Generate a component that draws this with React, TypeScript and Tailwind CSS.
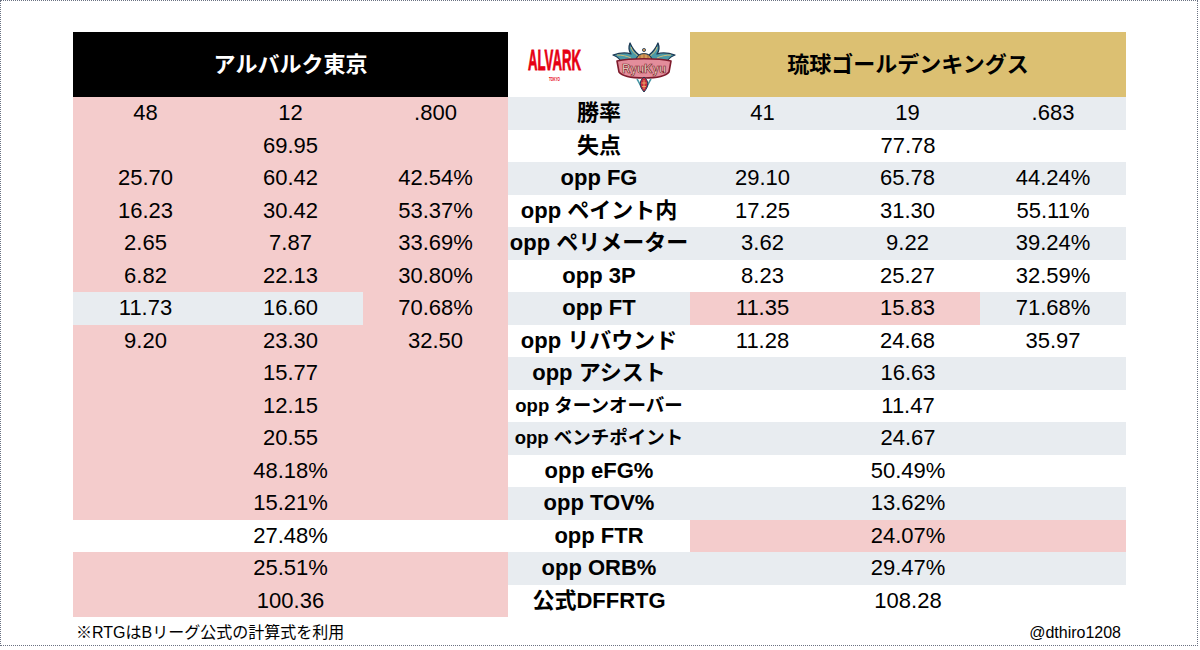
import React from "react";

type Bg = "p" | "g" | "w";
type Side = { v: string[]; bg: Bg[] };
type Row = { label: string; small?: boolean; l: Side; r: Side; stripe: Bg };

const bgClass: Record<Bg, string> = {
    p: "bg-[#f4cccc]",
    g: "bg-[#e8ecf0]",
    w: "bg-white",
};

const tri = (a: string, b: string, c: string, bg: Bg): Side => ({ v: [a, b, c], bg: [bg, bg, bg] });
const one = (a: string, bg: Bg): Side => ({ v: [a], bg: [bg] });

const rows: Row[] = [
    { label: "勝率", l: tri("48", "12", ".800", "p"), r: tri("41", "19", ".683", "g"), stripe: "g" },
    { label: "失点", l: one("69.95", "p"), r: one("77.78", "w"), stripe: "w" },
    { label: "opp FG", l: tri("25.70", "60.42", "42.54%", "p"), r: tri("29.10", "65.78", "44.24%", "g"), stripe: "g" },
    { label: "opp ペイント内", l: tri("16.23", "30.42", "53.37%", "p"), r: tri("17.25", "31.30", "55.11%", "w"), stripe: "w" },
    { label: "opp ペリメーター", l: tri("2.65", "7.87", "33.69%", "p"), r: tri("3.62", "9.22", "39.24%", "g"), stripe: "g" },
    { label: "opp 3P", l: tri("6.82", "22.13", "30.80%", "p"), r: tri("8.23", "25.27", "32.59%", "w"), stripe: "w" },
    {
        label: "opp FT",
        l: { v: ["11.73", "16.60", "70.68%"], bg: ["g", "g", "p"] },
        r: { v: ["11.35", "15.83", "71.68%"], bg: ["p", "p", "g"] },
        stripe: "g",
    },
    { label: "opp リバウンド", l: tri("9.20", "23.30", "32.50", "p"), r: tri("11.28", "24.68", "35.97", "w"), stripe: "w" },
    { label: "opp アシスト", l: one("15.77", "p"), r: one("16.63", "g"), stripe: "g" },
    { label: "opp ターンオーバー", small: true, l: one("12.15", "p"), r: one("11.47", "w"), stripe: "w" },
    { label: "opp ベンチポイント", small: true, l: one("20.55", "p"), r: one("24.67", "g"), stripe: "g" },
    { label: "opp eFG%", l: one("48.18%", "p"), r: one("50.49%", "w"), stripe: "w" },
    { label: "opp TOV%", l: one("15.21%", "p"), r: one("13.62%", "g"), stripe: "g" },
    { label: "opp FTR", l: one("27.48%", "w"), r: one("24.07%", "p"), stripe: "w" },
    { label: "opp ORB%", l: one("25.51%", "p"), r: one("29.47%", "g"), stripe: "g" },
    { label: "公式DFFRTG", l: one("100.36", "p"), r: one("108.28", "w"), stripe: "w" },
];

const font = { fontFamily: '"Liberation Sans", "Noto Sans CJK JP", sans-serif' };

function Cells({ side, widths, full }: { side: Side; widths: string[]; full: string }) {
    if (side.v.length === 1) {
        return <div className={`flex ${full} items-center justify-center ${bgClass[side.bg[0]]}`}>{side.v[0]}</div>;
    }
    return (
        <>
            {side.v.map((v, i) => (
                <div key={i} className={`flex items-center justify-center ${widths[i]} ${bgClass[side.bg[i]]}`}>
                    {v}
                </div>
            ))}
        </>
    );
}

function AlvarkLogo() {
    return (
        <svg width="56" height="38" viewBox="0 0 56 38" className="shrink-0 overflow-visible">
            <text
                x="1"
                y="22"
                fontFamily="Liberation Sans, sans-serif"
                fontWeight="700"
                fontSize="29"
                textLength="53"
                lengthAdjust="spacingAndGlyphs"
                fill="#e60012"
                stroke="#e60012"
                strokeWidth="0.8"
            >
                ALVARK
            </text>
            <text
                x="22"
                y="33"
                fontFamily="Liberation Sans, sans-serif"
                fontWeight="700"
                fontSize="6"
                textLength="11"
                lengthAdjust="spacingAndGlyphs"
                fill="#e60012"
            >
                TOKYO
            </text>
        </svg>
    );
}

function RyukyuLogo() {
    return (
        <svg width="64" height="50" viewBox="0 0 64 50" className="shrink-0">
            {/* horns + wings */}
            <path
                d="M27 13 C23 10 20 6 18 1 C16 6 17 9 19 12 C13 10 7 11 1 13 C6 15 9 18 10 22 L27 19 Z"
                fill="#4a9aa8"
                stroke="#1d3a55"
                strokeWidth="1.3"
                strokeLinejoin="round"
            />
            <path
                d="M37 13 C41 10 44 6 46 1 C48 6 47 9 45 12 C51 10 57 11 63 13 C58 15 55 18 54 22 L37 19 Z"
                fill="#4a9aa8"
                stroke="#1d3a55"
                strokeWidth="1.3"
                strokeLinejoin="round"
            />
            <path d="M19 5 C20 9 23 12 26 14 M5 13 C10 13 15 14 19 16" stroke="#e0c070" strokeWidth="0.9" fill="none" />
            <path d="M45 5 C44 9 41 12 38 14 M59 13 C54 13 49 14 45 16" stroke="#e0c070" strokeWidth="0.9" fill="none" />
            {/* dome */}
            <path d="M24 19 C24 9 40 9 40 19 Z" fill="#d49a5a" stroke="#1d3a55" strokeWidth="1.2" />
            <path d="M28 18 L28 13 M32 18 L32 11 M36 18 L36 13" stroke="#9a5e2c" strokeWidth="0.8" />
            <circle cx="32" cy="8" r="1.6" fill="#d49a5a" stroke="#1d3a55" strokeWidth="0.8" />
            {/* banner */}
            <path
                d="M5 19 C18 16 46 16 59 19 L57 30 C54 34 44 36 32 36 C20 36 10 34 7 30 Z"
                fill="#e38d9b"
                stroke="#7e1b2c"
                strokeWidth="1.6"
                strokeLinejoin="round"
            />
            <text
                x="10"
                y="31"
                fontFamily="Liberation Sans, sans-serif"
                fontWeight="700"
                fontSize="12"
                textLength="44"
                lengthAdjust="spacingAndGlyphs"
                fill="#fbeedd"
                stroke="#7a1a28"
                strokeWidth="0.7"
            >
                RyuKyu
            </text>
            {/* flame */}
            <path d="M25 37 C27 40 28 43 30 46" stroke="#4a9aa8" strokeWidth="1.6" fill="none" />
            <path d="M39 37 C37 40 36 43 34 46" stroke="#4a9aa8" strokeWidth="1.6" fill="none" />
            <path d="M32 35 C27 39 27 44 32 50 C37 44 37 39 32 35 Z" fill="#c62b3b" stroke="#1d3a55" strokeWidth="1" />
            <path d="M32 38 L32 47 M29.5 41 L34.5 41 M30 44.5 L34 44.5" stroke="#f0c070" strokeWidth="0.8" />
        </svg>
    );
}

export default function App() {
    const lw = ["w-[145px]", "w-[145px]", "w-[145px]"];
    const rw = ["w-[145px]", "w-[145px]", "w-[146px]"];
    return (
        <div className="h-[646px] w-[1198px] border border-dotted border-gray-500 bg-white text-black" style={font}>
            <div className="pl-[72px] pt-[31px]">
                <div className="w-[1053px]">
                    {/* header */}
                    <div className="flex h-[65px]">
                        <div className="flex w-[435px] items-center justify-center bg-black pb-[1px] text-[22px] font-bold text-white">
                            アルバルク東京
                        </div>
                        <div className="flex w-[182px] items-center bg-white pl-[19px] pt-[4px]">
                            <AlvarkLogo />
                            <div className="ml-[29px] mt-[1px]">
                                <RyukyuLogo />
                            </div>
                        </div>
                        <div className="flex w-[436px] items-center justify-center bg-[#dcc072] pb-[1px] text-[22px] font-bold">
                            琉球ゴールデンキングス
                        </div>
                    </div>
                    {/* rows */}
                    {rows.map((row, i) => (
                        <div key={i} className="flex h-[32.5px] text-[22px] leading-none">
                            <Cells side={row.l} widths={lw} full="w-[435px]" />
                            <div
                                className={`flex w-[182px] items-center justify-center whitespace-nowrap font-bold ${bgClass[row.stripe]} ${row.small ? "text-[18.5px]" : "text-[22px]"}`}
                            >
                                {row.label}
                            </div>
                            <Cells side={row.r} widths={rw} full="w-[436px]" />
                        </div>
                    ))}
                    {/* footer */}
                    <div className="mt-[7px] flex items-center justify-between pl-[3px] pr-[5px] leading-[18px]">
                        <span className="text-[16px]">※RTGはBリーグ公式の計算式を利用</span>
                        <span className="text-[16px]">@dthiro1208</span>
                    </div>
                </div>
            </div>
        </div>
    );
}
